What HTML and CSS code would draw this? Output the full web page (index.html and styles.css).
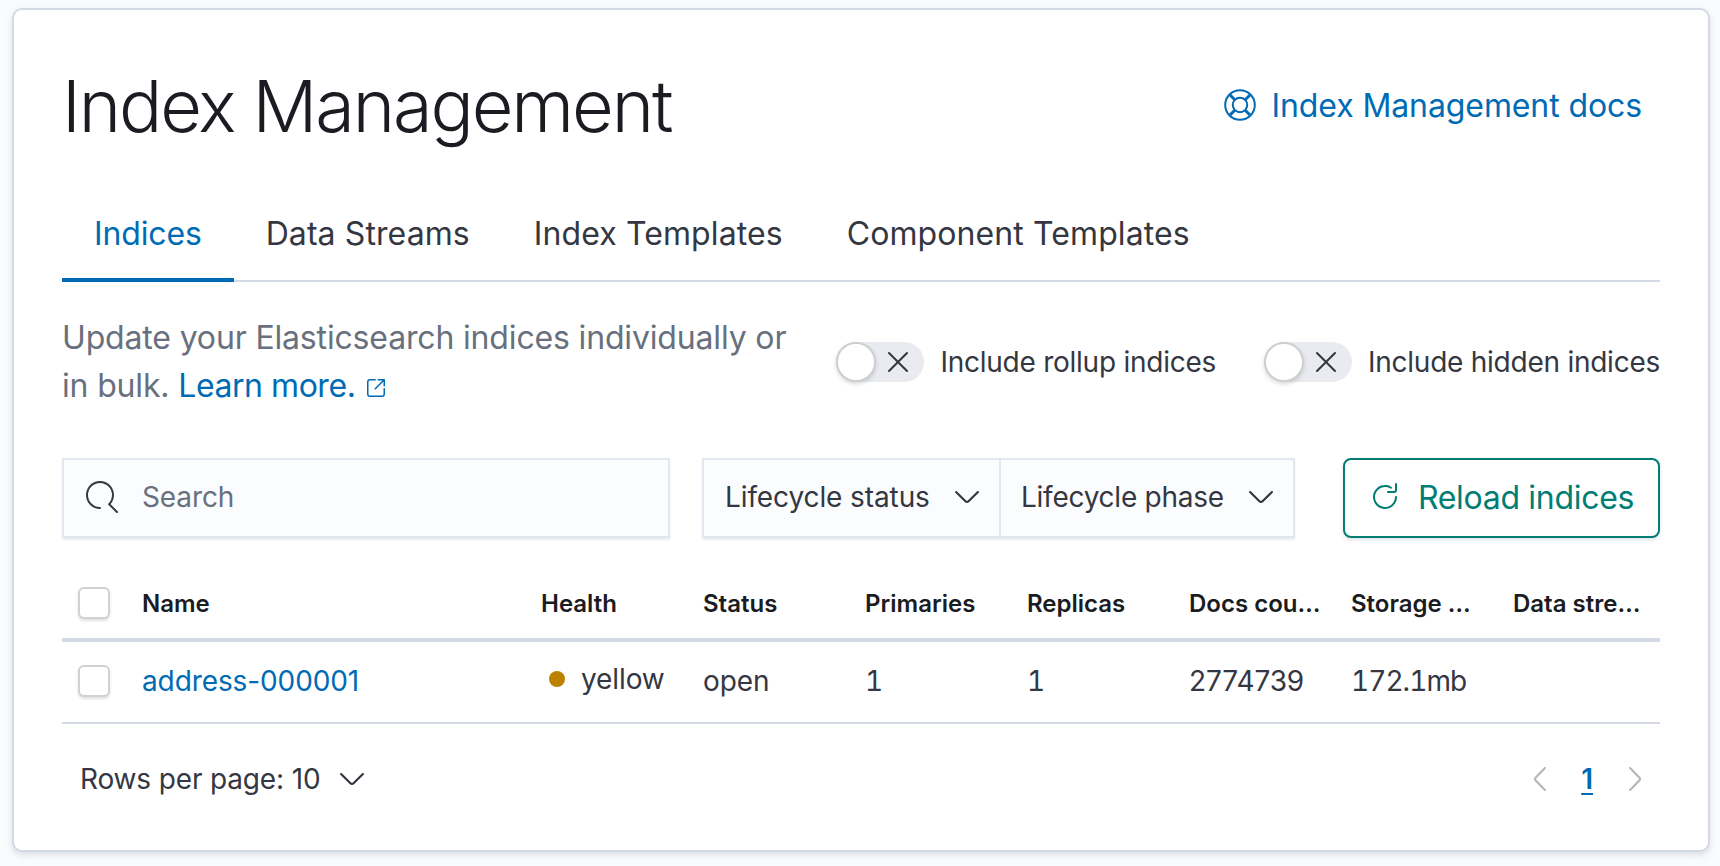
FILE: index.html
```html
<!DOCTYPE html>
<html lang="en">
<head>
<meta charset="utf-8">
<title>Index Management</title>
<link rel="stylesheet" href="styles.css">
</head>
<body>
<main class="card">
  <header class="head">
    <h1 class="title">Index Management</h1>
    <a class="docs" href="#">
      <svg class="icon32" viewBox="0 0 16 16" fill="none" stroke="currentColor"><circle cx="8" cy="8" r="7.4" stroke-width="1"/><circle cx="8" cy="8" r="3.6" stroke-width="1"/><path d="M3 3l2.4 2.4M13 3l-2.4 2.4M3 13l2.4-2.4M13 13l-2.4-2.4" stroke-width="1.5"/></svg>
      <span>Index Management docs</span>
    </a>
  </header>
  <nav class="tabs">
    <a class="tab tab-active" href="#">Indices</a>
    <a class="tab" href="#">Data Streams</a>
    <a class="tab" href="#">Index Templates</a>
    <a class="tab" href="#">Component Templates</a>
  </nav>
  <section class="desc-row">
    <p class="desc">Update your Elasticsearch indices individually or in bulk. <a class="link link-learn" href="#">Learn more.</a><svg class="popout" viewBox="0 0 16 16" fill="currentColor"><path d="M13 8.5a.5.5 0 111 0V12a2 2 0 01-2 2H4a2 2 0 01-2-2V4a2 2 0 012-2h3.5a.5.5 0 010 1H4a1 1 0 00-1 1v8a1 1 0 001 1h8a1 1 0 001-1V8.5zM7.854 8.854a.5.5 0 11-.708-.708L12.293 3H9.5a.5.5 0 010-1h4a.5.5 0 01.5.5v4a.5.5 0 01-1 0V3.707L7.854 8.854z"/></svg></p>
    <div class="switches">
      <label class="switch">
        <span class="track"><span class="thumb"></span><svg class="icon32 cross" viewBox="0 0 16 16" fill="currentColor"><path d="M7.293 8L3.146 3.854a.5.5 0 11.708-.708L8 7.293l4.146-4.147a.5.5 0 01.708.708L8.707 8l4.147 4.146a.5.5 0 01-.708.708L8 8.707l-4.146 4.147a.5.5 0 01-.708-.708L7.293 8z"/></svg></span>
        <span class="switch-label">Include rollup indices</span>
      </label>
      <label class="switch">
        <span class="track"><span class="thumb"></span><svg class="icon32 cross" viewBox="0 0 16 16" fill="currentColor"><path d="M7.293 8L3.146 3.854a.5.5 0 11.708-.708L8 7.293l4.146-4.147a.5.5 0 01.708.708L8.707 8l4.147 4.146a.5.5 0 01-.708.708L8 8.707l-4.146 4.147a.5.5 0 01-.708-.708L7.293 8z"/></svg></span>
        <span class="switch-label">Include hidden indices</span>
      </label>
    </div>
  </section>
  <section class="toolbar">
    <div class="search">
      <svg class="icon32" viewBox="0 0 16 16" fill="currentColor"><path d="M11.271 11.978l3.872 3.873a.502.502 0 00.708 0 .502.502 0 000-.708l-3.565-3.564c2.38-2.747 2.267-6.923-.342-9.532-2.73-2.73-7.17-2.73-9.898 0-2.728 2.729-2.728 7.17 0 9.9a6.955 6.955 0 004.949 2.05.5.5 0 000-1 5.96 5.96 0 01-4.242-1.757 6.01 6.01 0 010-8.486c2.337-2.34 6.143-2.34 8.484 0a6.01 6.01 0 010 8.486.5.5 0 00.034.738z"/></svg>
      <span class="placeholder">Search</span>
    </div>
    <div class="filters">
      <div class="filter filter-a"><span>Lifecycle status</span><svg class="icon32" viewBox="0 0 16 16" fill="currentColor"><path d="M13.069 5.157L8.384 9.768a.546.546 0 01-.768 0L2.93 5.158a.552.552 0 00-.771 0 .53.53 0 000 .759l4.684 4.61c.641.631 1.672.63 2.312 0l4.684-4.61a.53.53 0 000-.76.552.552 0 00-.771 0z"/></svg></div>
      <div class="filter filter-b"><span>Lifecycle phase</span><svg class="icon32" viewBox="0 0 16 16" fill="currentColor"><path d="M13.069 5.157L8.384 9.768a.546.546 0 01-.768 0L2.93 5.158a.552.552 0 00-.771 0 .53.53 0 000 .759l4.684 4.61c.641.631 1.672.63 2.312 0l4.684-4.61a.53.53 0 000-.76.552.552 0 00-.771 0z"/></svg></div>
    </div>
    <button class="reload" type="button">
      <svg class="icon32" viewBox="0 0 16 16" fill="currentColor"><path d="M11.228 2.942a.5.5 0 11-.538.842A5 5 0 1013 8a.5.5 0 111 0 6 6 0 11-2.772-5.058zM14 1.5v3A1.5 1.5 0 0112.5 6h-3a.5.5 0 010-1h3a.5.5 0 00.5-.5v-3a.5.5 0 111 0z"/></svg>
      <span>Reload indices</span>
    </button>
  </section>
  <section class="table">
    <div class="tr th">
      <div class="cell check"><span class="box"></span></div>
      <div class="cell">Name</div>
      <div class="cell">Health</div>
      <div class="cell">Status</div>
      <div class="cell">Primaries</div>
      <div class="cell">Replicas</div>
      <div class="cell">Docs cou…</div>
      <div class="cell">Storage …</div>
      <div class="cell">Data stre…</div>
    </div>
    <div class="tr td">
      <div class="cell check"><span class="box"></span></div>
      <div class="cell"><a class="link" href="#">address-000001</a></div>
      <div class="cell health"><span class="dot"></span><span class="health-text">yellow</span></div>
      <div class="cell">open</div>
      <div class="cell num">1</div>
      <div class="cell num">1</div>
      <div class="cell">2774739</div>
      <div class="cell num num-size">172.1mb</div>
      <div class="cell"></div>
    </div>
  </section>
  <footer class="foot">
    <div class="rows"><span>Rows per page: 10</span><svg class="icon32" viewBox="0 0 16 16" fill="currentColor"><path d="M13.069 5.157L8.384 9.768a.546.546 0 01-.768 0L2.93 5.158a.552.552 0 00-.771 0 .53.53 0 000 .759l4.684 4.61c.641.631 1.672.63 2.312 0l4.684-4.61a.53.53 0 000-.76.552.552 0 00-.771 0z"/></svg></div>
    <div class="pager">
      <svg class="icon32 chev" viewBox="0 0 16 16" fill="currentColor"><path d="M10.843 13.069L6.232 8.384a.546.546 0 010-.768l4.61-4.685a.552.552 0 000-.771.53.53 0 00-.759 0l-4.61 4.684a1.65 1.65 0 000 2.312l4.61 4.684a.53.53 0 00.76 0 .552.552 0 000-.771z"/></svg>
      <a class="page" href="#">1</a>
      <svg class="icon32 chev" viewBox="0 0 16 16" fill="currentColor"><path d="M5.157 13.069L9.768 8.384a.546.546 0 000-.768L5.158 2.93a.552.552 0 010-.771.53.53 0 01.759 0l4.61 4.684a1.65 1.65 0 010 2.312l-4.61 4.684a.53.53 0 01-.76 0 .552.552 0 010-.771z"/></svg>
    </div>
  </footer>
</main>
</body>
</html>
```
FILE: styles.css
```css
* { box-sizing: border-box; }
html, body { margin: 0; height: 100%; }
body {
  background: #fafbfd;
  padding: 8px 10px 0 12px;
  font-family: Inter, "Liberation Sans", sans-serif;
  font-size: 28px;
  letter-spacing: -.1px;
  color: #343741;
}
a { text-decoration: none; }
.icon32 { width: 32px; height: 32px; flex: none; display: block; }

.card {
  background: #fff;
  border: 2px solid #d3dae6;
  border-radius: 10px;
  padding: 48px 48px 46px;
  box-shadow: 0 3px 6px rgba(152, 162, 179, .3);
}

.head { display: flex; justify-content: space-between; align-items: center; height: 96px; }
.title { margin: 0; font-size: 72px; line-height: 96px; font-weight: 300; letter-spacing: -2.1px; color: #1a1c21; }
.docs { display: flex; align-items: center; gap: 16px; color: #006bb4; font-size: 32px; letter-spacing: -.1px; margin: -2px 18px 0 0; }

.tabs { display: flex; margin-top: 32px; height: 96px; border-bottom: 2px solid #d3dae6; }
.tab { padding: 0 32px; height: 96px; line-height: 96px; font-size: 32px; letter-spacing: .1px; color: #343741; }
.tab-active { color: #006bb4; border-bottom: 4px solid #006bb4; margin-bottom: -2px; letter-spacing: -.15px; }

.desc-row { display: flex; justify-content: space-between; align-items: center; margin-top: 32px; }
.desc { margin: 0; width: 740px; font-size: 32px; line-height: 48px; letter-spacing: -.16px; color: #69707d; }
.link { color: #006bb4; }
.link-learn { letter-spacing: -.45px; }
.popout { width: 24px; height: 24px; margin-left: 9px; color: #006bb4; vertical-align: -3px; }

.switches { display: flex; gap: 48px; }
.switch { display: flex; align-items: center; gap: 16px; }
.switch-label { letter-spacing: -.25px; }
.track { position: relative; display: flex; align-items: center; justify-content: flex-end; width: 88px; height: 40px; padding-right: 10px; background: #e9ebf0; border-radius: 20px; }
.thumb { position: absolute; left: 0; top: 0; width: 40px; height: 40px; background: #fff; border: 2px solid #cdd0d3; border-radius: 50%; box-shadow: 0 2px 4px rgba(0, 0, 0, .15); }
.cross { color: #343741; }

.toolbar { display: flex; align-items: stretch; height: 80px; margin-top: 48px; }
.search { flex: 1; display: flex; align-items: center; gap: 24px; padding: 0 0 2px 22px; background: #fbfcfd; border: 2px solid #e3e7f0; box-shadow: 0 2px 2px rgba(152, 162, 179, .2); }
.placeholder { color: #69707d; }
.filters { display: flex; margin-left: 32px; background: #fbfcfd; border: 2px solid #e3e7f0; box-shadow: 0 2px 2px rgba(152, 162, 179, .2); }
.filter { display: flex; align-items: center; justify-content: space-between; padding: 0 16px 2px 21px; }
.filter-a { width: 297px; border-right: 2px solid #e3e7f0; }
.filter-b { width: 292px; padding-left: 20px; letter-spacing: -.25px; }
.reload { display: flex; align-items: center; justify-content: center; gap: 17px; width: 317px; margin-left: 48px; padding: 0 0 2px; background: #fff; border: 2px solid #017d73; border-radius: 8px; color: #017d73; font: 400 32px Inter, "Liberation Sans", sans-serif; letter-spacing: -.3px; box-shadow: 0 2px 4px rgba(152, 162, 179, .3); }

.table { margin-top: 32px; }
.tr { display: grid; grid-template-columns: 64px 1fr repeat(7, 162px); align-items: center; padding-right: 1px; }
.th { height: 72px; padding-bottom: 2px; border-bottom: 4px solid #d3dae6; font-size: 24px; font-weight: 600; letter-spacing: 0; color: #1a1c21; }
.td { height: 82px; padding-bottom: 2px; border-bottom: 2px solid #d3dae6; }
.cell { padding: 0 16px; white-space: nowrap; }
.num { font-variant-numeric: tabular-nums; }
.num-size { letter-spacing: -.95px; }
.check { padding: 0 0 0 16px; }
.box { display: block; width: 32px; height: 32px; background: #fff; border: 2px solid #ced1d5; border-radius: 6px; box-shadow: 0 2px 3px rgba(0, 0, 0, .12); }
.health { display: flex; align-items: center; gap: 16px; padding-left: 24px; margin-top: -4px; }
.dot { width: 16px; height: 16px; flex: none; border-radius: 50%; background: #bd8100; }

.foot { display: flex; justify-content: space-between; align-items: center; height: 48px; margin-top: 32px; }
.rows { display: flex; align-items: center; gap: 16px; padding: 0 0 2px 18px; letter-spacing: -.15px; }
.pager { display: flex; align-items: center; margin-right: 9px; padding-bottom: 2px; }
.chev { color: #b4b7bb; }
.page { margin: 0 26px 0 25px; color: #006bb4; font-weight: 600; text-decoration: underline; text-underline-offset: 4px; }
```
